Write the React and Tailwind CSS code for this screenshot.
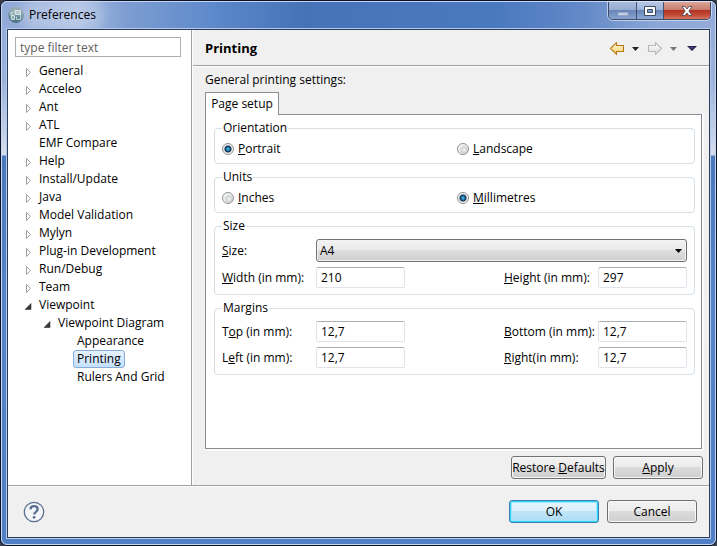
import React, { useState } from "react";

const treeItems = [
  { name: "General", arrow: "closed", level: 0 },
  { name: "Acceleo", arrow: "closed", level: 0 },
  { name: "Ant", arrow: "closed", level: 0 },
  { name: "ATL", arrow: "closed", level: 0 },
  { name: "EMF Compare", arrow: "none", level: 0 },
  { name: "Help", arrow: "closed", level: 0 },
  { name: "Install/Update", arrow: "closed", level: 0 },
  { name: "Java", arrow: "closed", level: 0 },
  { name: "Model Validation", arrow: "closed", level: 0 },
  { name: "Mylyn", arrow: "closed", level: 0 },
  { name: "Plug-in Development", arrow: "closed", level: 0 },
  { name: "Run/Debug", arrow: "closed", level: 0 },
  { name: "Team", arrow: "closed", level: 0 },
  { name: "Viewpoint", arrow: "open", level: 0 },
  { name: "Viewpoint Diagram", arrow: "open", level: 1 },
  { name: "Appearance", arrow: "none", level: 2 },
  { name: "Printing", arrow: "none", level: 2 },
  { name: "Rulers And Grid", arrow: "none", level: 2 },
];

const indents = ["pl-[17px]", "pl-9", "pl-[55px]"];

// Splits a caption around its keyboard mnemonic and underlines that letter.
function Mnemonic({ text, at = 0 }) {
  return (
    <span className="whitespace-pre">
      {text.slice(0, at)}
      <span className="underline underline-offset-1">{text[at]}</span>
      {text.slice(at + 1)}
    </span>
  );
}

function AppIcon() {
  return (
    <svg className="size-4 shrink-0" viewBox="0 0 16 16" aria-hidden="true">
      <defs>
        <linearGradient id="globe" x1="0" y1="0" x2="0" y2="1">
          <stop offset="0" stopColor="#9db0b4" />
          <stop offset="0.5" stopColor="#6f959d" />
          <stop offset="1" stopColor="#3e6b7d" />
        </linearGradient>
      </defs>
      <circle cx="8" cy="8" r="7.9" fill="url(#globe)" />
      <path d="M2 4.500h3v4h-3zM5.500 2.500h2v5h-2z" fill="#c6d6d8" opacity=".7" />
      <path d="M7.500 3.500h5v4h-5z" fill="#b5c9cc" stroke="#e3eef0" strokeWidth=".8" />
      <path d="M3.500 8.500h3v4h-3z" fill="#8fadb3" stroke="#e3eef0" strokeWidth=".8" />
      <path d="M12.500 7.500v5h-4v-3" fill="none" stroke="#d4e2e5" strokeWidth=".8" />
    </svg>
  );
}

function TreeArrow({ kind }) {
  return (
    <svg className="h-[18px] w-2 shrink-0" viewBox="0 0 8 18" aria-hidden="true">
      {kind === "closed" && <path d="M1.5 6.5v8l4-4z" fill="#fff" stroke="#a0a0a0" />}
      {kind === "open" && <path d="M6 7.5v6H0z" fill="#3a3a3a" stroke="#222" strokeWidth=".5" />}
    </svg>
  );
}

function NavArrow({ direction }) {
  const back = direction === "back";
  return (
    <svg className="h-[13px] w-4" viewBox="0 0 16 13" aria-hidden="true">
      <defs>
        <linearGradient id={"nav-" + direction} x1="0" y1="0" x2="0" y2="1">
          <stop offset="0" stopColor={back ? "#fffbe0" : "#ffffff"} />
          <stop offset="1" stopColor={back ? "#f6cf6a" : "#dcdcd4"} />
        </linearGradient>
      </defs>
      <path
        d={back ? "M1.5 6.5 7.500 .7V3.500h7v6h-7v2.800z" : "M14.5 6.5 8.500 .7V3.500h-7v6h7v2.800z"}
        fill={"url(#nav-" + direction + ")"}
        stroke={back ? "#b5790f" : "#b9b9b9"}
        strokeWidth="1.1"
      />
    </svg>
  );
}

function Caret({ className }) {
  return (
    <svg className={"h-1 w-[7px] " + className} viewBox="0 0 7 4" fill="currentColor" aria-hidden="true">
      <path d="M0 0h7L3.5 4z" />
    </svg>
  );
}

function TitleBar() {
  return (
    <header className="flex h-[26px] items-start justify-between bg-[linear-gradient(90deg,#91a9d6_0,#a9bde2_10%,#7d9dd2_17%,#5c88ca_30%,#4672b8_42%,#4b79c0_70%,#6389c8_82%,#8ba6d6_92%,#94abd8_100%)]">
      <div className="flex h-[26px] items-center gap-[5px] pl-0.5">
        <AppIcon />
        <h1 className="rounded-full bg-white/20 text-xs text-black shadow-[0_0_10px_8px_rgba(255,255,255,0.2)]">
          Preferences
        </h1>
      </div>
      <div className="flex h-[18px] overflow-hidden rounded-b-[5px] border border-t-0 border-[#3e4a68] shadow-[0_0_0_1px_rgba(220,232,250,0.7)]">
        <button
          type="button"
          aria-label="Minimize"
          className="flex w-[28px] items-center justify-center border-r border-[#43506f] bg-[linear-gradient(#a9bcdc_0,#93abd2_50%,#6885b6_50%,#86a3d0_100%)]"
        >
          <svg className="h-3 w-3" viewBox="0 0 12 12" aria-hidden="true">
            <path d="M1 7.5h10v3H1z" fill="#c3cfe4" stroke="#8d9dbd" strokeWidth=".6" />
          </svg>
        </button>
        <button
          type="button"
          aria-label="Maximize"
          className="flex w-[27px] items-center justify-center border-r border-[#43506f] bg-[linear-gradient(#b6c7e3_0,#9db3d8_50%,#6885b6_50%,#8caad6_100%)]"
        >
          <svg className="h-3 w-3" viewBox="0 0 12 12" aria-hidden="true">
            <path d="M.5 1.5h11v9H.5z" fill="#fff" stroke="#3d4a63" />
            <path d="M3.5 4.5h5v3h-5z" fill="#7d9ac8" stroke="#3d4a63" />
          </svg>
        </button>
        <button
          type="button"
          aria-label="Close"
          className="flex w-[46px] items-center justify-center bg-[linear-gradient(#dba698_0,#c9796a_48%,#b13425_50%,#c5503b_80%,#d77860_100%)]"
        >
          <svg className="h-3 w-3" viewBox="0 0 12 12" aria-hidden="true">
            <path
              d="M1 1.5h3L6 4l2-2.5h3L7.8 6l3.2 4.5H8L6 8l-2 2.5H1L4.2 6z"
              fill="#fff"
              stroke="#4a4450"
              strokeWidth=".8"
            />
          </svg>
        </button>
      </div>
    </header>
  );
}

function PushButton({ children, className }) {
  return (
    <button
      type="button"
      className={
        "h-[23px] rounded-[3px] border border-[#707070] bg-[linear-gradient(#f3f3f3_0,#ebebeb_48%,#dcdcdc_50%,#cecece_100%)] text-center leading-5 shadow-[inset_0_0_0_1px_#f8f8f8] " +
        className
      }
    >
      {children}
    </button>
  );
}

function Group({ title, className, children }) {
  return (
    <fieldset className="rounded-[4px] border border-[#d5dfe5] px-[7px] pb-1.5">
      <legend className="px-px leading-4">{title}</legend>
      <div className={"grid pt-[5px] " + className}>{children}</div>
    </fieldset>
  );
}

function Radio({ group, label, defaultChecked }) {
  return (
    <label className="flex h-4 items-center gap-1">
      <input
        type="radio"
        name={group}
        defaultChecked={defaultChecked}
        className="size-3 shrink-0 appearance-none rounded-full border border-[#8e8f8f] bg-[radial-gradient(circle_at_60%_60%,#f4f4f4_0,#cfd2d5_3px,#f6f6f6_5px)] checked:bg-[radial-gradient(circle,#4fc3f0_0,#1b6a9c_2px,#0c2d4a_3px,#e9eaeb_4px,#f6f6f6_5px)]"
      />
      <Mnemonic text={label} />
    </label>
  );
}

function Field({ id, label, at, value, className = "" }) {
  return (
    <>
      <label htmlFor={id} className={"leading-[21px] " + className}>
        <Mnemonic text={label} at={at} />
      </label>
      <input
        id={id}
        type="text"
        defaultValue={value}
        className="h-[21px] w-full rounded-[2px] border border-[#e2e3ea] border-t-[#abadb3] bg-white px-1 outline-none"
      />
    </>
  );
}

export default function App() {
  const [selected, setSelected] = useState("Printing");
  const fieldGrid = "grid-cols-[94px_89px_1fr_94px_89px] gap-y-[5px]";

  return (
    <div className="flex min-h-screen bg-[#3a3f4c] font-['Open_Sans','Noto_Sans',sans-serif] text-xs text-black">
      <div className="flex w-full flex-col rounded-[7px] border border-[#0c1226] bg-[linear-gradient(#91a9d6_0,#9db3dc_80px,#d6ddee_154px,#4b78bd_155px,#5684c8_300px,#4f7fc5_100%)]">
        <div className="flex grow flex-col rounded-md border border-[#c5d6f0] px-1 pb-[5px]">
          <TitleBar />
          <div className="flex grow flex-col border border-[#b4cbe8]">
            <div className="flex grow flex-col border border-[#2b3b5e] bg-[#f0f0f0]">
              <div className="flex grow">
                <aside className="w-[184px] shrink-0 border-r border-[#a0a0a0] bg-white pt-[7px]">
                  <input
                    type="text"
                    aria-label="Filter"
                    placeholder="type filter text"
                    className="ml-[7px] block h-5 w-[166px] border border-[#abadb3] px-1 outline-none placeholder:text-[#606060]"
                  />
                  <ul className="pt-[5px]">
                    {treeItems.map((item) => (
                      <li key={item.name} className={"flex h-[18px] " + indents[item.level]}>
                        <TreeArrow kind={item.arrow} />
                        <button
                          type="button"
                          onClick={() => setSelected(item.name)}
                          className={
                            "ml-0.5 h-[18px] rounded-[3px] border px-[3px] leading-4 whitespace-nowrap " +
                            (item.name === selected
                              ? "border-[#84acdd] bg-[linear-gradient(#e6f2fe,#c6dffb)]"
                              : "border-transparent")
                          }
                        >
                          {item.name}
                        </button>
                      </li>
                    ))}
                  </ul>
                </aside>

                <main className="flex min-w-0 grow flex-col border-l border-white">
                  <div className="flex h-9 items-center justify-between border-b border-[#a0a0a0] pt-0.5 pr-3 pl-3 shadow-[0_1px_0_#fff]">
                    <h2 className="text-[13px] font-bold">Printing</h2>
                    <div className="flex items-center">
                      <button type="button" aria-label="Back">
                        <NavArrow direction="back" />
                      </button>
                      <button type="button" aria-label="Back history" className="ml-[7px]">
                        <Caret className="text-[#222]" />
                      </button>
                      <button type="button" aria-label="Forward" className="ml-2">
                        <NavArrow direction="forward" />
                      </button>
                      <button type="button" aria-label="Forward history" className="ml-[7px]">
                        <Caret className="text-[#777]" />
                      </button>
                      <button type="button" aria-label="View menu" className="ml-[10px]">
                        <svg className="h-[5px] w-[10px]" viewBox="0 0 10 5" aria-hidden="true">
                          <path d="M0 0h10L5 5z" fill="#1e1c3c" />
                          <path d="M1.5.7h6L5 3.4z" fill="#4b3f8f" />
                        </svg>
                      </button>
                    </div>
                  </div>

                  <div className="flex grow flex-col pt-1.5 pr-1.5 pb-1.5 pl-3">
                    <p className="leading-4">General printing settings:</p>
                    <div className="flex pt-1">
                      <button
                        type="button"
                        className="z-10 -mb-px h-[23px] w-[74px] border border-b-0 border-[#898c95] bg-white text-center whitespace-nowrap"
                      >
                        Page setup
                      </button>
                    </div>
                    <div className="mr-px flex grow flex-col gap-[5px] border border-[#898c95] bg-white pt-[5px] pr-1.5 pl-2 shadow-[1px_1px_0_1px_#fafafa]">
                      <Group title="Orientation" className="grid-cols-2 gap-[5px]">
                        <Radio group="orientation" label="Portrait" defaultChecked />
                        <Radio group="orientation" label="Landscape" />
                      </Group>
                      <Group title="Units" className="grid-cols-2 gap-[5px]">
                        <Radio group="units" label="Inches" />
                        <Radio group="units" label="Millimetres" defaultChecked />
                      </Group>
                      <Group title="Size" className={fieldGrid}>
                        <label htmlFor="size" className="leading-[23px]">
                          <Mnemonic text="Size:" />
                        </label>
                        <div className="relative col-span-4">
                          <select
                            id="size"
                            className="block h-[23px] w-full appearance-none rounded-[3px] border border-[#707070] bg-[linear-gradient(#f2f2f2_0,#ebebeb_48%,#dddddd_50%,#cfcfcf_100%)] px-[3px] shadow-[inset_0_0_0_1px_#f5f5f5] outline-none"
                          >
                            <option>A4</option>
                          </select>
                          <Caret className="pointer-events-none absolute top-[10px] right-[5px] text-black" />
                        </div>
                        <Field id="width" label="Width (in mm):" at={0} value="210" />
                        <Field id="height" label="Height (in mm):" at={0} value="297" className="col-start-4" />
                      </Group>
                      <Group title="Margins" className={fieldGrid}>
                        <Field id="top" label="Top (in mm):" at={1} value="12,7" />
                        <Field id="bottom" label="Bottom (in mm):" at={0} value="12,7" className="col-start-4" />
                        <Field id="left" label="Left (in mm):" at={1} value="12,7" />
                        <Field id="right" label="Right(in mm):" at={0} value="12,7" className="col-start-4" />
                      </Group>
                    </div>
                    <div className="flex justify-end gap-[7px] pt-[7px]">
                      <PushButton className="w-[95px] whitespace-nowrap">
                        <Mnemonic text="Restore Defaults" at={8} />
                      </PushButton>
                      <PushButton className="w-[90px]">
                        <Mnemonic text="Apply" />
                      </PushButton>
                    </div>
                  </div>
                </main>
              </div>

              <footer className="flex h-[52px] items-center justify-between border-t border-[#a0a0a0] pr-3 pl-[15px] shadow-[inset_0_1px_0_#fff]">
                <button type="button" aria-label="Help">
                  <svg className="size-[22px]" viewBox="0 0 22 22" aria-hidden="true">
                    <circle cx="11" cy="11" r="9.7" fill="#f3f5f8" stroke="#5b6f90" strokeWidth="1.3" />
                    <path
                      d="M7.4 8.3C7.6 6 9 5.2 11 5.2s3.7 1 3.7 3c0 2.600-3.500 2.700-3.500 5.300"
                      fill="none"
                      stroke="#5b6f90"
                      strokeWidth="2.3"
                    />
                    <circle cx="11.100" cy="16.300" r="1.400" fill="#5b6f90" />
                  </svg>
                </button>
                <div className="flex gap-2">
                  <button
                    type="button"
                    className="h-[23px] w-[90px] rounded-[3px] border border-[#3c7fb1] bg-[linear-gradient(#eaf6fd_0,#d9f0fc_48%,#c0e5f9_50%,#aedcf5_100%)] text-center leading-5 shadow-[inset_0_0_0_1px_#30d4fb,inset_0_0_0_2px_#9be6fb]"
                  >
                    OK
                  </button>
                  <PushButton className="w-[90px]">Cancel</PushButton>
                </div>
              </footer>
            </div>
          </div>
        </div>
      </div>
    </div>
  );
}
